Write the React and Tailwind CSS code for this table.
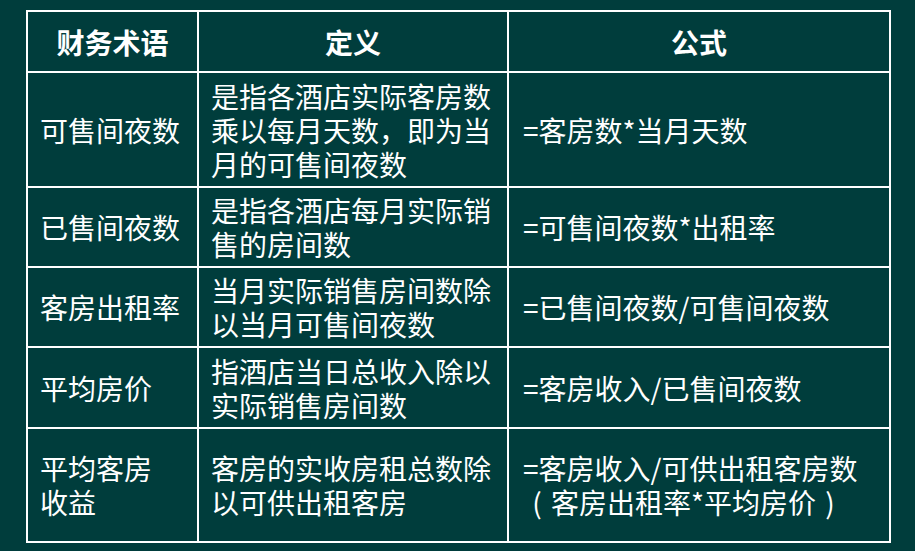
import React from 'react'

const Paren = ({ c }) => <span className="inline-block w-[28px] text-center">{c}</span>

const rows = [
    { term: '可售间夜数', def: '是指各酒店实际客房数乘以每月天数，即为当月的可售间夜数', formula: '=客房数*当月天数', h: 'h-[115px]' },
    { term: '已售间夜数', def: '是指各酒店每月实际销售的房间数', formula: '=可售间夜数*出租率', h: 'h-[80px]' },
    { term: '客房出租率', def: '当月实际销售房间数除以当月可售间夜数', formula: '=已售间夜数/可售间夜数', h: 'h-[80px]' },
    { term: '平均房价', def: '指酒店当日总收入除以实际销售房间数', formula: '=客房收入/已售间夜数', h: 'h-[81px]' },
    {
        term: <>平均客房<br />收益</>,
        def: '客房的实收房租总数除以可供出租客房',
        formula: <>=客房收入/可供出租客房数<br /><Paren c="(" />客房出租率*平均房价<Paren c=")" /></>,
        h: 'h-[114px]',
    },
]

function App() {
    return (
        <div className="w-[915px] h-[551px] bg-[#003d3c] pt-[10px] pl-[26px] text-white font-['Microsoft_YaHei','Noto_Sans_CJK_SC',sans-serif]">
            <table className="border-collapse w-[863px] table-fixed text-[28px] leading-[34px]">
                <colgroup>
                    <col className="w-[171px]" />
                    <col className="w-[310px]" />
                    <col className="w-[382px]" />
                </colgroup>
                <thead>
                    <tr className="h-[61px]">
                        <th className="border-2 border-white font-bold text-center">财务术语</th>
                        <th className="border-2 border-white font-bold text-center">定义</th>
                        <th className="border-2 border-white font-bold text-center">公式</th>
                    </tr>
                </thead>
                <tbody>
                    {rows.map((r, i) => (
                        <tr key={i} className={r.h}>
                            <td className="border-2 border-white pl-[12px] align-middle">{r.term}</td>
                            <td className="border-2 border-white pl-[12px] pr-[2px] align-middle">{r.def}</td>
                            <td className="border-2 border-white pl-[14px] align-middle">{r.formula}</td>
                        </tr>
                    ))}
                </tbody>
            </table>
        </div>
    )
}

export default App
